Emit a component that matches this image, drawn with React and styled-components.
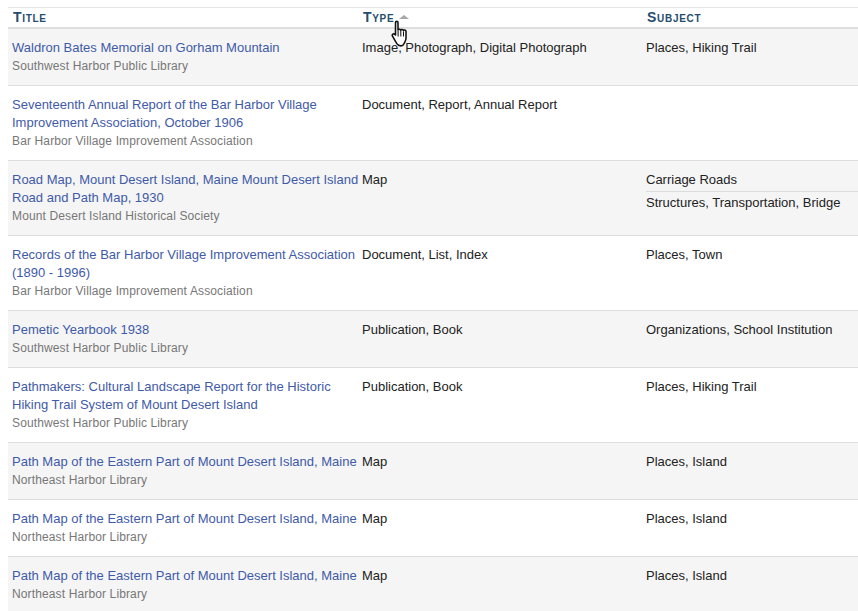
import React from "react";
import styled, { createGlobalStyle } from "styled-components";

const GlobalStyle = createGlobalStyle`
  html, body {
    margin: 0;
    padding: 0;
    background: #fff;
    overflow: hidden;
  }
  body {
    font-family: "Liberation Sans", Arial, sans-serif;
    font-size: 13px;
    line-height: 18px;
    color: #222;
  }
`;

const rows = [
  { title: "Waldron Bates Memorial on Gorham Mountain", source: "Southwest Harbor Public Library", type: "Image, Photograph, Digital Photograph", subjects: ["Places, Hiking Trail"] },
  { title: "Seventeenth Annual Report of the Bar Harbor Village Improvement Association, October 1906", source: "Bar Harbor Village Improvement Association", type: "Document, Report, Annual Report", subjects: [] },
  { title: "Road Map, Mount Desert Island, Maine Mount Desert Island Road and Path Map, 1930", source: "Mount Desert Island Historical Society", type: "Map", subjects: ["Carriage Roads", "Structures, Transportation, Bridge"] },
  { title: "Records of the Bar Harbor Village Improvement Association (1890 - 1996)", source: "Bar Harbor Village Improvement Association", type: "Document, List, Index", subjects: ["Places, Town"] },
  { title: "Pemetic Yearbook 1938", source: "Southwest Harbor Public Library", type: "Publication, Book", subjects: ["Organizations, School Institution"] },
  { title: "Pathmakers: Cultural Landscape Report for the Historic Hiking Trail System of Mount Desert Island", source: "Southwest Harbor Public Library", type: "Publication, Book", subjects: ["Places, Hiking Trail"] },
  { title: "Path Map of the Eastern Part of Mount Desert Island, Maine", source: "Northeast Harbor Library", type: "Map", subjects: ["Places, Island"] },
  { title: "Path Map of the Eastern Part of Mount Desert Island, Maine", source: "Northeast Harbor Library", type: "Map", subjects: ["Places, Island"] },
  { title: "Path Map of the Eastern Part of Mount Desert Island, Maine", source: "Northeast Harbor Library", type: "Map", subjects: ["Places, Island"] },
];

const Page = styled.div`
  padding: 7px 0 0 8px;
  width: 850px;
`;

const Table = styled.div`
  border-top: 1px solid #e6e6e6;
`;

const HeaderRow = styled.div`
  display: grid;
  grid-template-columns: 350px 284px 1fr;
  height: 19px;
  border-bottom: 2px solid #dedede;
`;

const HeaderCell = styled.div`
  position: relative;
  padding-left: 5px;
  font-size: 14px;
  line-height: 19px;
  font-weight: bold;
  font-variant: small-caps;
  letter-spacing: 0.7px;
  color: #264d6e;
`;

const SortArrow = styled.span`
  display: inline-block;
  margin-left: 5px;
  vertical-align: 3px;
  border-left: 5px solid transparent;
  border-right: 5px solid transparent;
  border-bottom: 4px solid #a8a8a8;
`;

const Cursor = styled.svg`
  position: absolute;
  left: 33px;
  top: 12px;
  width: 19px;
  height: 27px;
  z-index: 2;
`;

const Row = styled.div`
  display: grid;
  grid-template-columns: 352px 282px 1fr;
  padding: 10px 0;
  border-bottom: 1px solid #dedede;
  background: ${(p) => (p.$shaded ? "#f5f5f5" : "#fff")};
`;

const TitleCell = styled.div`
  padding-left: 4px;
`;

const TitleLink = styled.a`
  display: block;
  color: #3f5aa8;
  text-decoration: none;
`;

const Source = styled.div`
  color: #777;
  font-size: 12px;
  letter-spacing: 0.13px;
`;

const TextCell = styled.div`
  padding-left: ${(p) => p.$inset}px;
  color: #222;
`;

const Subject = styled.div`
  & + & {
    margin-top: 2px;
    padding-top: 2px;
    border-top: 1px solid #dcdcdc;
  }
`;

function HandCursor() {
  return (
    <Cursor viewBox="0 0 18 26">
      <path
        d="M4.2 2.5c0-1.6 2.4-1.6 2.4 0v7.2c.5-1.2 2.5-1.2 2.7.2.4-1.1 2.4-1 2.6.4.5-1 2.3-.8 2.4.6v6.6c0 2.4-1.2 3.6-2 5.4-.5 1.4-1.5 2-3 2-2 0-3-.8-4-2.4L1.3 15.5c-1-1.7 1-3.1 2.9-1.2V2.5z"
        fill="#fff"
        stroke="#111"
        strokeWidth="1.5"
        strokeLinejoin="round"
      />
      <path d="M6.7 10v6M9.3 10.4v5.6M11.9 11v5" stroke="#111" strokeWidth="1" fill="none" />
    </Cursor>
  );
}

export default function App() {
  return (
    <Page>
      <GlobalStyle />
      <Table>
        <HeaderRow>
          <HeaderCell>Title</HeaderCell>
          <HeaderCell>
            Type
            <SortArrow />
            <HandCursor />
          </HeaderCell>
          <HeaderCell>Subject</HeaderCell>
        </HeaderRow>
        {rows.map((row, i) => (
          <Row key={i} $shaded={i % 2 === 0}>
            <TitleCell>
              <TitleLink href="#">{row.title}</TitleLink>
              <Source>{row.source}</Source>
            </TitleCell>
            <TextCell $inset={2}>{row.type}</TextCell>
            <TextCell $inset={4}>
              {row.subjects.map((s) => (
                <Subject key={s}>{s}</Subject>
              ))}
            </TextCell>
          </Row>
        ))}
      </Table>
    </Page>
  );
}
